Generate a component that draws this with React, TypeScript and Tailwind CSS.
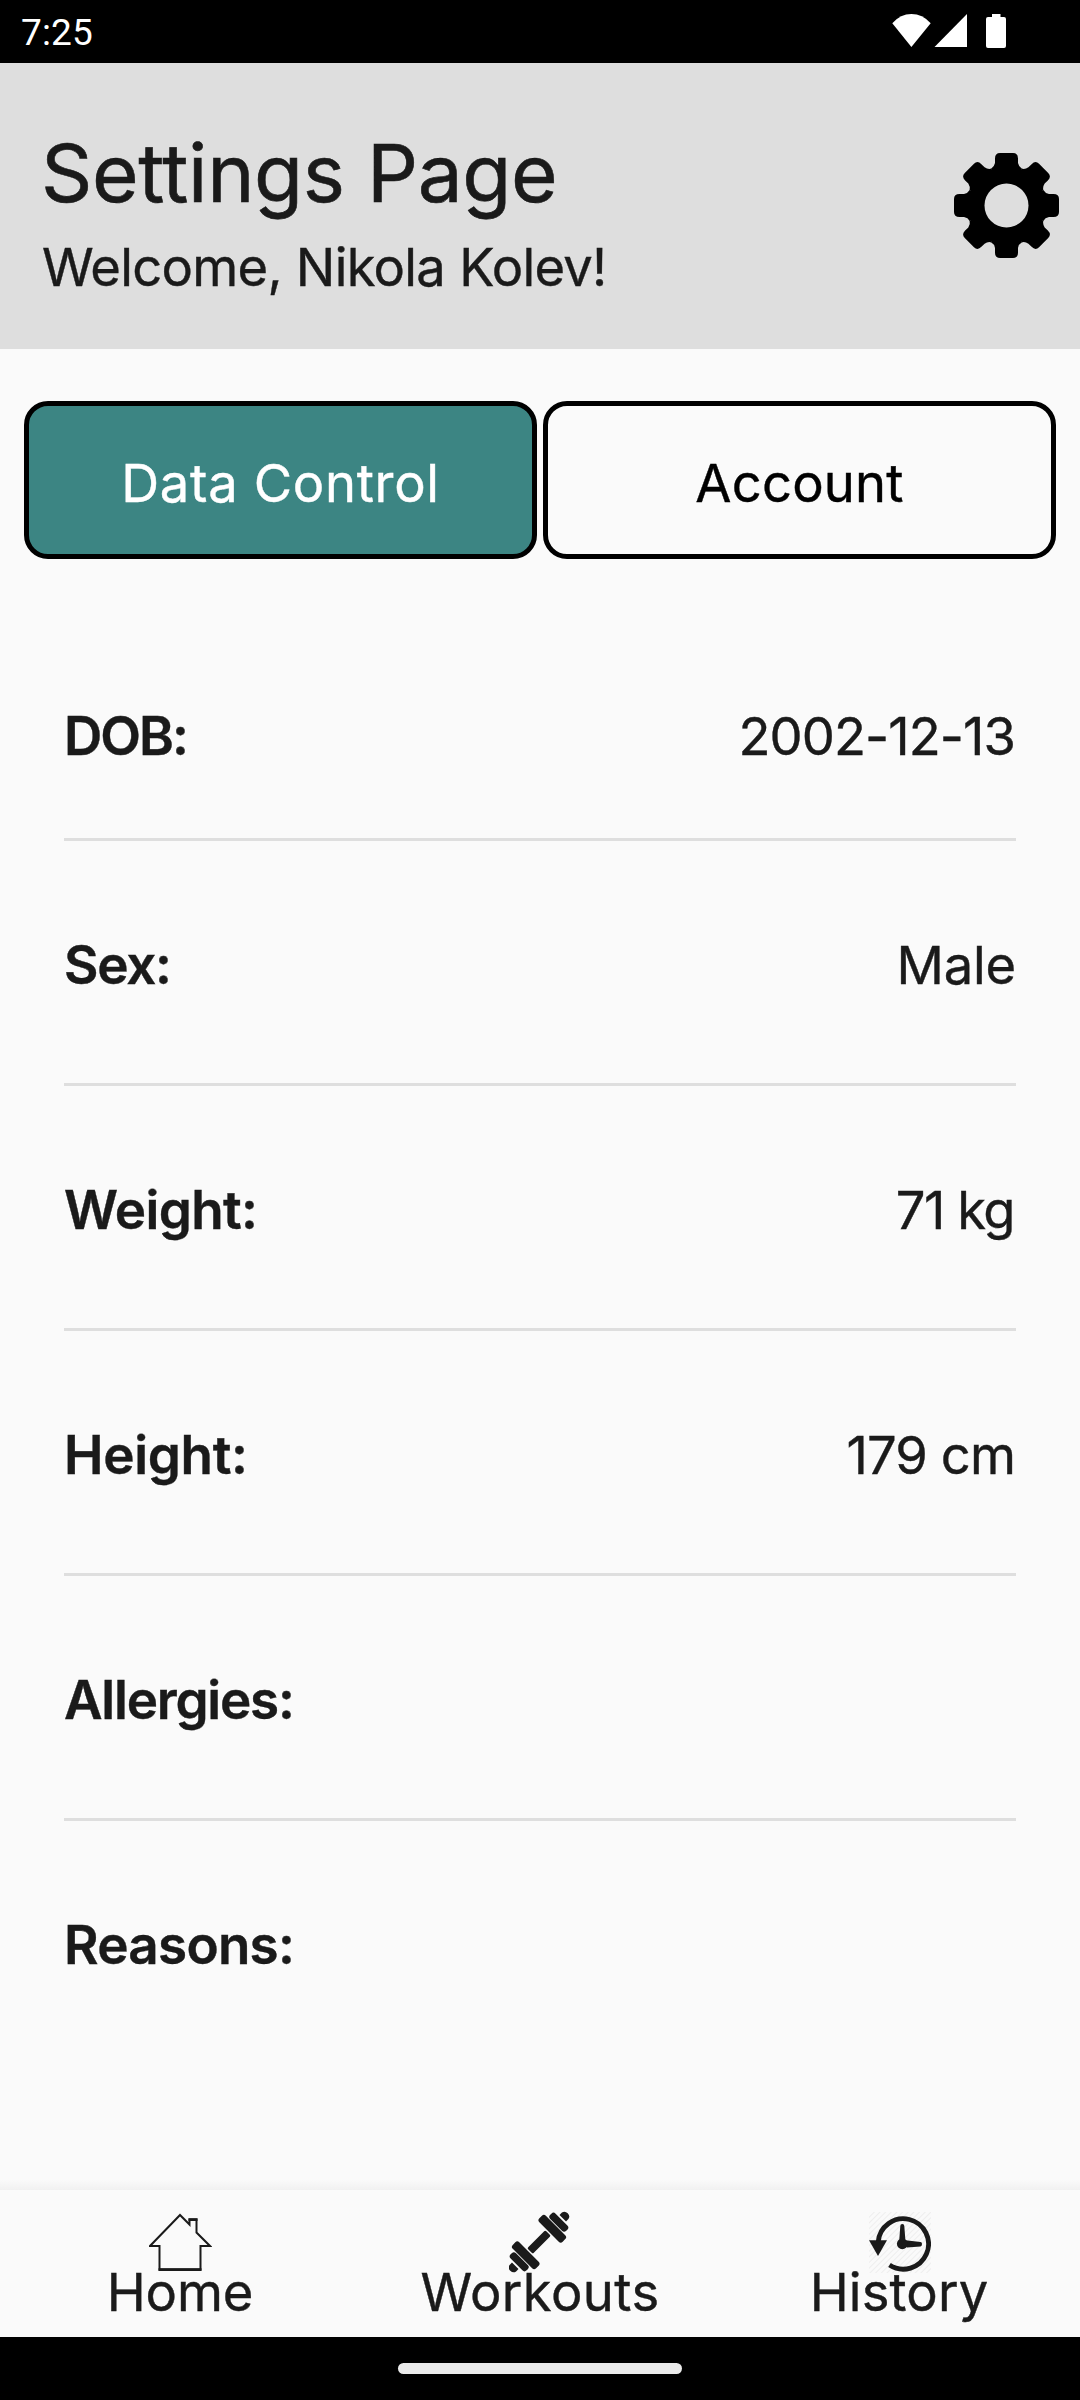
type Row = {
  label: string;
  labelClass: string;
  value?: string;
  valueClass?: string;
};

const rows: Row[] = [
  { label: 'DOB:', labelClass: 'tracking-[-1.98px]', value: '2002-12-13', valueClass: 'tracking-[-0.92px] mr-px' },
  { label: 'Sex:', labelClass: 'tracking-[-1.28px]', value: 'Male', valueClass: 'tracking-[-0.21px]' },
  { label: 'Weight:', labelClass: 'tracking-[-0.65px]', value: '71 kg', valueClass: 'tracking-[-1.5px] mr-0.5' },
  { label: 'Height:', labelClass: 'tracking-[-0.34px]', value: '179 cm', valueClass: 'tracking-[-0.9px] mr-px' },
  { label: 'Allergies:', labelClass: 'tracking-[-1.22px]' },
  { label: 'Reasons:', labelClass: 'tracking-[-0.73px]' },
];

const toothAngles = [0, 45, 90, 135, 180, 225, 270, 315];

function GearIcon() {
  return (
    <svg className="h-[105px] w-[105px]" viewBox="-52.5 -52.5 105 105">
      {toothAngles.map((angle) => (
        <path
          key={angle}
          transform={`rotate(${angle})`}
          d="M0 0 L-15.4 -36.8 Q-12.3 -38.5 -11.5 -42.5 V-47 Q-11.5 -52.5 -6.5 -52.5 H6.5 Q11.5 -52.5 11.5 -47 V-42.5 Q12.3 -38.5 15.4 -36.8 Z"
          fill="#000"
        />
      ))}
      <circle r="38" fill="#000" />
      <circle r="22" fill="#dedede" />
    </svg>
  );
}

function StatusIcons() {
  return (
    <svg className="h-[34px] w-[114px]" viewBox="892 14 114 34" fill="#fff">
      <path d="M911.4 47 L892.3 23.2 Q900.5 14 911.4 14 Q922.5 14 930.7 23.2 Z" />
      <path d="M934.5 47 H967 V14 Z" />
      <path d="M992 14 H1000.5 V17 H1004 Q1006 17 1006 19 V46 Q1006 48 1004 48 H988 Q986 48 986 46 V19 Q986 17 988 17 H992 Z" />
    </svg>
  );
}

function HomeIcon() {
  return (
    <svg className="h-[62px] w-[63px]" viewBox="0.5 0 63 62" fill="none" stroke="#1a1a1a" strokeWidth="2">
      <path d="M31.5 4 L1.5 35 H11 V58.5 H52 V35 H61.5 L48 21.5 V8.5 H41 V13.5 Z" />
      <path d="M10 58.6 H53 M40 8.6 H49" strokeWidth="2.8" />
    </svg>
  );
}

function DumbbellIcon() {
  return (
    <svg className="h-[62px] w-[62px]" viewBox="0 0 62 62" fill="#1a1a1a">
      <g transform="translate(30 31) rotate(-45)">
        <rect x="-12.8" y="-4" width="25.6" height="8" rx="1.5" />
        <rect x="14.2" y="-16.5" width="9.2" height="33" rx="2.8" />
        <rect x="24.2" y="-11.3" width="7.6" height="22.6" rx="3" />
        <path d="M33.6 -4.6 H37 Q40.6 -4 40.6 0 Q40.6 4 37 4.6 H33.6 Z" />
        <rect x="-23.4" y="-16.5" width="9.2" height="33" rx="2.8" />
        <rect x="-31.8" y="-11.3" width="7.6" height="22.6" rx="3" />
        <path d="M-33.6 -4.6 H-37 Q-40.6 -4 -40.6 0 Q-40.6 4 -37 4.6 H-33.6 Z" />
      </g>
    </svg>
  );
}

function HistoryIcon() {
  return (
    <svg className="h-[62px] w-[62px]" viewBox="0 0 62 62">
      <defs>
        <pattern id="hatch" width="4" height="4" patternUnits="userSpaceOnUse" patternTransform="rotate(45)">
          <rect width="1" height="4" fill="#eeeeee" />
        </pattern>
      </defs>
      <rect y="1" width="62" height="61" fill="url(#hatch)" />
      <path d="M9.2 31 A25.2 25.2 0 1 1 20.5 54" fill="none" stroke="#1a1a1a" strokeWidth="4.8" />
      <path d="M0 29.3 H18 L9 45 Z" fill="#1a1a1a" />
      <path
        d="M31.3 15 Q31.3 13 33.3 13 Q35.3 13 35.3 15 L36.4 29.2 L51.5 30.9 Q53 31 53 33 Q53 35.4 51.5 35.4 L38 36.4 L30.2 30 Z"
        fill="#1a1a1a"
      />
      <circle cx="33.3" cy="32.8" r="5.4" fill="#1a1a1a" />
    </svg>
  );
}

export default function App() {
  return (
    <div className="flex h-[2400px] w-[1080px] flex-col bg-[#fafafa] font-['Inter','Liberation_Sans',sans-serif] text-[52.5px] leading-[64px] text-[#1a1a1a] [-webkit-text-stroke:0.4px_currentColor]">
      <div className="flex h-[63px] shrink-0 items-start justify-between bg-black pl-[21px] pr-[74px]">
        <span className="pt-[11px] font-['Roboto',sans-serif] text-[37px] leading-[43px] tracking-[0.15px] text-white [-webkit-text-stroke:0px]">
          7:25
        </span>
        <div className="flex pt-3.5">
          <StatusIcons />
        </div>
      </div>

      <header className="flex h-[286px] shrink-0 justify-between bg-[#dedede] pl-[42px] pr-[21px]">
        <div className="pt-[61px]">
          <h1 className="-ml-px text-[80px] leading-[97px] tracking-[-0.32px] [-webkit-text-stroke:0.6px_currentColor]">
            Settings Page
          </h1>
          <p className="mt-3.5 tracking-[-0.72px]">Welcome, Nikola Kolev!</p>
        </div>
        <div className="pt-[90px]">
          <GearIcon />
        </div>
      </header>

      <div className="mt-[52px] flex h-[158px] shrink-0 gap-1.5 px-6">
        <button className="flex-1 rounded-[24px] border-5 border-black bg-[#3c8583] pt-1.5 tracking-[0.69px] text-white">
          Data Control
        </button>
        <button className="flex-1 rounded-[24px] border-5 border-black pt-1.5 tracking-[0.21px] text-black">Account</button>
      </div>

      <main className="mt-[53px] flex flex-1 flex-col px-16">
        {rows.map((row, i) => (
          <div
            key={row.label}
            className={
              i === 0
                ? 'flex h-[229px] justify-between border-b-3 border-[#dedede] pt-[92px]'
                : i === rows.length - 1
                  ? 'flex justify-between pt-[92px]'
                  : 'flex h-[245px] justify-between border-b-3 border-[#dedede] pt-[92px]'
            }
          >
            <span className={`text-[53px] font-semibold ${row.labelClass}`}>{row.label}</span>
            {row.value && <span className={row.valueClass}>{row.value}</span>}
          </div>
        ))}
      </main>

      <div className="h-2.5 shrink-0 bg-linear-to-b from-[#fafafa] to-[#f1f1f1]" />
      <nav className="grid h-[147px] shrink-0 grid-cols-3 pt-[21px] leading-[38px]">
        <div className="flex flex-col items-center">
          <HomeIcon />
          <span className="tracking-[-0.16px]">Home</span>
        </div>
        <div className="flex flex-col items-center">
          <DumbbellIcon />
          <span className="tracking-[0.44px]">Workouts</span>
        </div>
        <div className="flex flex-col items-center">
          <HistoryIcon />
          <span className="mr-0.5 tracking-[0.14px]">History</span>
        </div>
      </nav>

      <div className="flex h-[63px] shrink-0 justify-center bg-black pt-[26px]">
        <div className="h-[11px] w-[284px] rounded-full bg-[#ebebeb]" />
      </div>
    </div>
  );
}
